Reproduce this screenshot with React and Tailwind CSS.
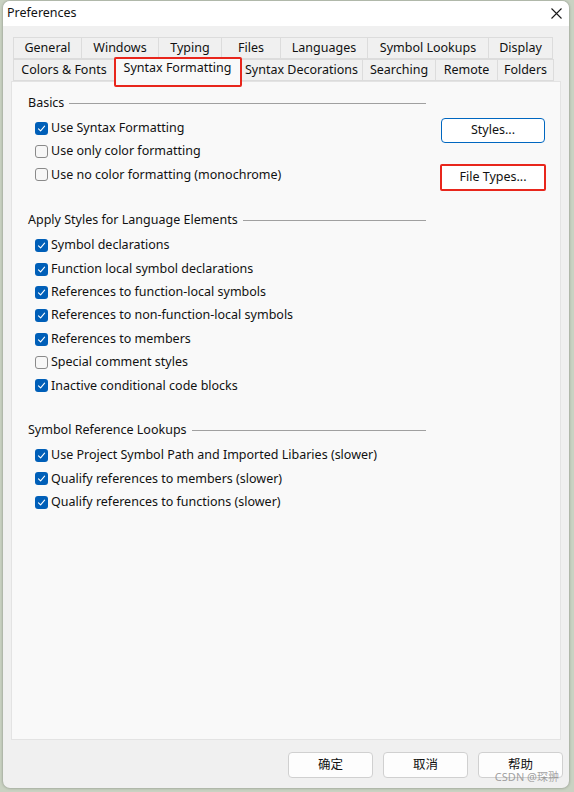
import React from 'react';

const row1 = [
  ['General', 'w-[69px]'],
  ['Windows', 'w-[78px]'],
  ['Typing', 'w-[64px]'],
  ['Files', 'w-[60px]'],
  ['Languages', 'w-[88px]'],
  ['Symbol Lookups', 'w-[122px]'],
  ['Display', 'w-[65px]'],
];

const row2 = [
  ['Colors & Fonts', 'w-[102px]'],
  ['Syntax Formatting', 'w-[127px]', true],
  ['Syntax Decorations', 'w-[123px]'],
  ['Searching', 'w-[74px]'],
  ['Remote', 'w-[63px]'],
  ['Folders', 'w-[57px]'],
];

const groups = [
  {
    title: 'Basics',
    gap: '',
    items: [
      ['Use Syntax Formatting', true],
      ['Use only color formatting', false],
      ['Use no color formatting (monochrome)', false],
    ],
  },
  {
    title: 'Apply Styles for Language Elements',
    gap: 'mt-[24px]',
    items: [
      ['Symbol declarations', true],
      ['Function local symbol declarations', true],
      ['References to function-local symbols', true],
      ['References to non-function-local symbols', true],
      ['References to members', true],
      ['Special comment styles', false],
      ['Inactive conditional code blocks', true],
    ],
  },
  {
    title: 'Symbol Reference Lookups',
    gap: 'mt-[23px]',
    items: [
      ['Use Project Symbol Path and Imported Libaries (slower)', true],
      ['Qualify references to members (slower)', true],
      ['Qualify references to functions (slower)', true],
    ],
  },
];

function Tab({ label, w, selected }) {
  if (selected) {
    return (
      <div className={`${w} -ml-px h-[25px] -mt-[2px] -mb-px relative z-10 bg-[#f9f9f9] border border-b-0 border-[#d9d9d9] flex items-center justify-center pb-[3px]`}>
        {label}
      </div>
    );
  }
  return (
    <div className={`${w} -ml-px h-[22px] border border-[#dcdcdc] bg-[#f0f0f0] flex items-center justify-center`}>
      {label}
    </div>
  );
}

function CheckBox({ checked }) {
  if (checked) {
    return (
      <span className="w-[13px] h-[13px] rounded-[3px] bg-[#005fb8] flex items-center justify-center shrink-0">
        <svg width="9" height="9" viewBox="0 0 9 9" fill="none">
          <path d="M1.5 4.8 L3.6 6.8 L7.6 2.2" stroke="#fff" strokeWidth="1.1" strokeLinecap="round" strokeLinejoin="round" />
        </svg>
      </span>
    );
  }
  return <span className="w-[13px] h-[13px] rounded-[3px] border border-[#8a8a8a] bg-[#f7f7f7] shrink-0" />;
}

function Group({ title, items, gap }) {
  return (
    <div className={gap}>
      <div className="flex items-center h-[20px]">
        <span>{title}</span>
        <div className="flex-1 h-px bg-[#a0a0a0] ml-[5px]" />
      </div>
      <div className="mt-[3.5px] pl-[7px]">
        {items.map(([label, checked]) => (
          <div key={label} className="h-[23.35px] flex items-center gap-[3px]">
            <CheckBox checked={checked} />
            <span>{label}</span>
          </div>
        ))}
      </div>
    </div>
  );
}

export default function App() {
  return (
    <div className="w-[574px] h-[792px] bg-[#c9d2c2] pl-[3px] pt-[1px] pr-[5px] pb-[4px] font-['Noto_Sans','Noto_Sans_CJK_SC',sans-serif] text-[12.5px] text-[#111] leading-none">
      <div className="relative w-full h-full rounded-[7px] overflow-hidden bg-[#f0f0f0] shadow-[0_0_3px_rgba(0,0,0,0.35)] flex flex-col">
        {/* title bar */}
        <div className="h-[25px] bg-white flex items-center justify-between pl-[4px] pr-[7px] shrink-0">
          <span className="text-[12.5px]">Preferences</span>
          <svg width="11" height="11" viewBox="0 0 11 11">
            <path d="M0.5 0.5 L10.5 10.5 M10.5 0.5 L0.5 10.5" stroke="#1a1a1a" strokeWidth="1.1" />
          </svg>
        </div>

        {/* body */}
        <div className="flex-1 flex flex-col px-[8px] pt-[11px]">
          <div className="relative mx-[2px] pl-px">
            <div className="flex">
              {row1.map(([l, w]) => (
                <Tab key={l} label={l} w={w} />
              ))}
            </div>
            <div className="flex">
              {row2.map(([l, w, s]) => (
                <Tab key={l} label={l} w={w} selected={s} />
              ))}
            </div>
            <div className="absolute left-[101px] top-[20px] w-[128px] h-[30px] border-2 border-[#e8261c] rounded-[2px] z-20" />
          </div>

          <div className="h-[659px] bg-[#f9f9f9] border border-[#e3e3e3] pl-[16px] pt-[11px] flex">
            <div className="w-[398px]">
              {groups.map((g) => (
                <Group key={g.title} title={g.title} items={g.items} gap={g.gap} />
              ))}
            </div>
            <div className="ml-[15px] pt-[25px] flex flex-col">
              <button className="w-[104px] h-[25px] bg-white border border-[#0067c0] rounded-[4px] flex items-center justify-center">
                Styles...
              </button>
              <button className="mt-[21px] -ml-px w-[106px] h-[27px] bg-white border-2 border-[#e8261c] rounded-[2px] flex items-center justify-center">
                File Types...
              </button>
            </div>
          </div>

          <div className="flex justify-end gap-[10px] pt-[12px] -mr-[2px]">
            {['确定', '取消', '帮助'].map((t) => (
              <button key={t} className="w-[85px] h-[26px] bg-[#fdfdfd] border border-[#d0d0d0] rounded-[4px] flex items-center justify-center">
                {t}
              </button>
            ))}
          </div>
        </div>

        <span className="absolute right-[10px] bottom-[6px] text-[11px] text-[#8a8a8a]/80 z-30">CSDN @琛翀</span>
      </div>
    </div>
  );
}
